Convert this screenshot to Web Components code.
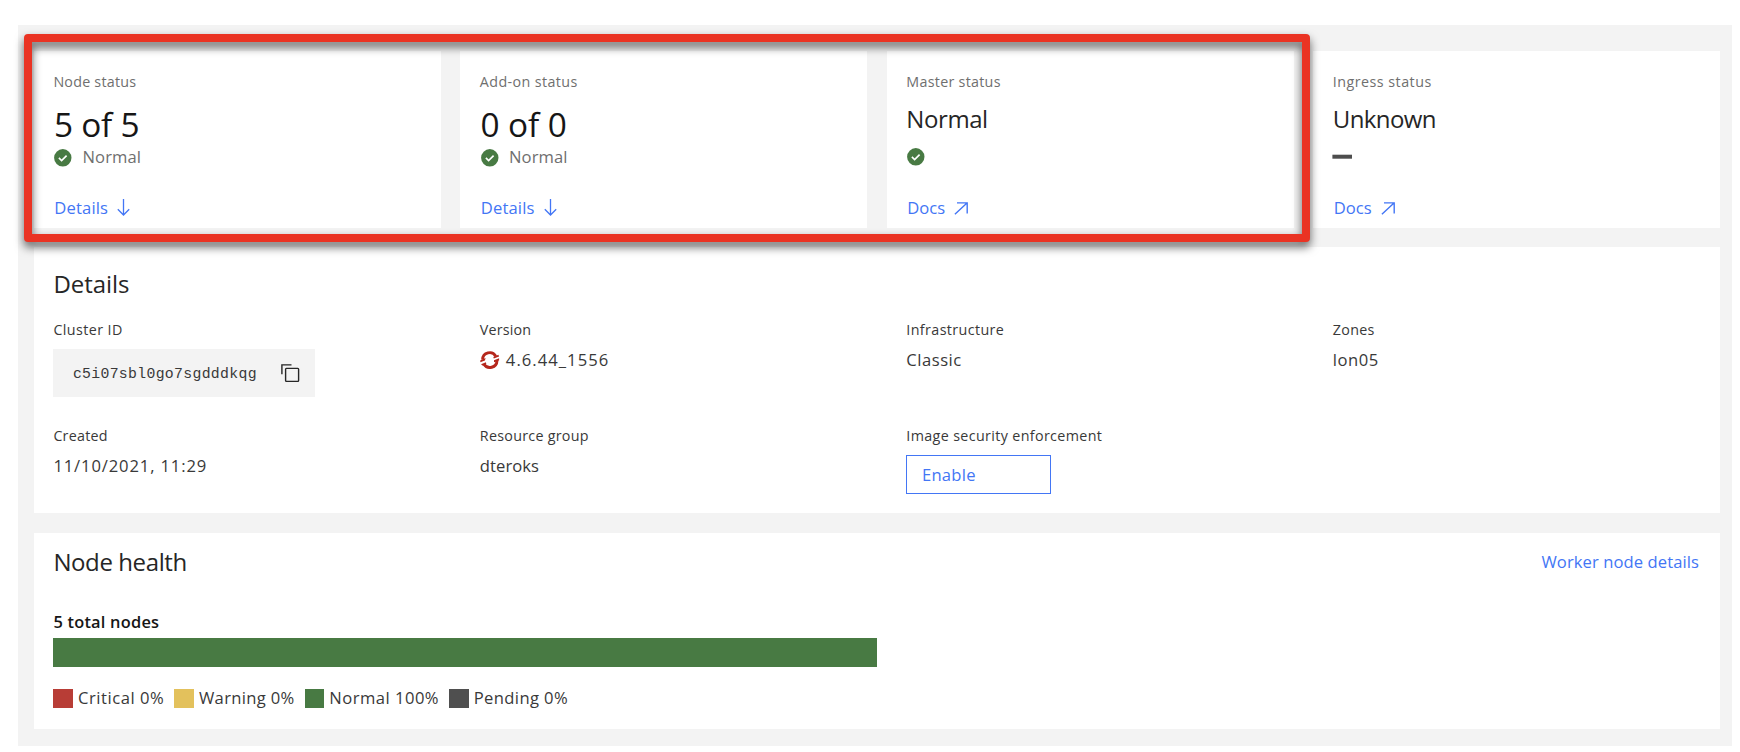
<!DOCTYPE html>
<html lang="en">
<head>
<meta charset="utf-8">
<title>Cluster overview</title>
<style>
html,body{margin:0;background:#fff}
body{width:1740px;height:752px;overflow:hidden;font-family:"Open Sans","Noto Sans",sans-serif;color:#161616}
</style>
</head>
<body>
<cluster-overview></cluster-overview>
<script>
const define = (name, html, init) => {
  const t = document.createElement('template');
  t.innerHTML = html;
  customElements.define(name, class extends HTMLElement {
    constructor() {
      super();
      this.attachShadow({mode: 'open'}).append(t.content.cloneNode(true));
    }
    connectedCallback() { if (init) init(this, this.shadowRoot); }
  });
};

/* Line of text, tracked so that it spans the width in its "w" attribute. */
define('ui-text', `<style>
  :host{display:block;white-space:nowrap;font-size:14.3px;line-height:20px;color:#393939}
  :host([kind=muted]){color:#6f6f6f}
  :host([kind=body]){font-size:16.6px;line-height:24px}
  :host([kind=grey]){font-size:16.6px;line-height:24px;color:#6f6f6f}
  :host([kind=link]){font-size:16.6px;line-height:24px;color:#4376f5}
  :host([kind=strong]){font-size:16.4px;line-height:24px;color:#161616;font-weight:600}
  :host([kind=title]){font-size:24px;line-height:32px;color:#262626}
  :host([kind=big]){font-size:33.4px;line-height:40px;color:#161616;font-weight:400}
  :host([kind=code]){font-family:"Liberation Mono",monospace;font-size:14.8px;line-height:20px}
  span{display:inline-block}
</style><span><slot></slot></span>`, (el, root) => {
  const span = root.querySelector('span');
  const n = el.textContent.length;
  const natural = span.getBoundingClientRect().width;
  span.style.letterSpacing = ((+el.getAttribute('w') + .4 - natural) / n).toFixed(3) + 'px';
});

const ICONS = {
  check: [17.6, 17.6, `<circle cx="8.8" cy="8.8" r="8.7" fill="#487a43"/><path d="M4.9 8.9l2.7 2.6 5-4.9" fill="none" stroke="#fff" stroke-width="1.7"/>`],
  down: [13, 17, `<path d="M6.5 0v15.8M.8 10.2l5.7 5.8 5.7-5.8" fill="none" stroke="#4376f5" stroke-width="1.3"/>`],
  out: [14, 13, `<path d="M3 .9h10.2v10.6M13 1L.9 12.3" fill="none" stroke="#4376f5" stroke-width="1.4"/>`],
  dash: [20, 17, `<rect x="-.6" y="6.7" width="19.6" height="4" fill="#4d4d4d"/>`],
  copy: [19, 19, `<rect x="4.6" y="4.4" width="13" height="13" rx=".8" fill="none" stroke="#262626" stroke-width="1.4"/><path d="M.9 10.2V.9h9.6" fill="none" stroke="#262626" stroke-width="1.4"/>`],
  openshift: [20, 19, `<g fill="none" stroke="#b5271c" stroke-width="2.9"><path d="M2.6 8.6A7.1 7.1 0 0 1 15.8 5.2"/><path d="M17 9.6A7.1 7.1 0 0 1 3.8 13"/></g><path d="M.4 9.2l5.2-2.1-.7 2.4L.3 11.3zM13.3 5.9l5.1-2.2.7 1.9-5.3 2zM1 13.2l4.9-1.9.4 1.6-3.4 1.8zM14 9.2l5.1-1.9v2.2l-5.1 1.8z" fill="#b5271c"/>`]
};
customElements.define('ui-icon', class extends HTMLElement {
  connectedCallback() {
    const [w, h, body] = ICONS[this.getAttribute('name')];
    this.attachShadow({mode: 'open'}).innerHTML =
      `<style>:host{display:block;flex:none}svg{display:block;overflow:visible}</style><svg width="${w}" height="${h}" viewBox="0 0 ${w} ${h}">${body}</svg>`;
  }
});

define('status-card', `<style>
  :host{display:flex;flex-direction:column;box-sizing:border-box;height:177px;background:#fff;padding:21.3px 19.7px 0 19.7px}
  .value{height:52px;box-sizing:border-box;padding-top:10.5px}
  :host([large]) .value{padding:12px 0 0 .6px}
  .state{display:flex;align-items:center;gap:10.6px;height:24px;margin-left:.7px}
  :host([large]) .state{padding-top:1.2px;margin-left:1px}
  .link{display:flex;align-items:center;gap:9px;margin:28px 0 0 .9px}
  :host([large]) .link{margin-top:26.3px}
</style>
<slot name="label"></slot><div class="value"><slot name="value"></slot></div>
<div class="state"><slot name="state"></slot></div><div class="link"><slot name="link"></slot></div>`);

define('ui-panel', `<style>:host{display:block;box-sizing:border-box;background:#fff;padding:0 19.7px}</style><slot></slot>`);

define('detail-field', `<style>
  :host{display:block}
  .v{margin-top:8.2px;display:flex;align-items:center;gap:6px}
</style><slot name="label"></slot><div class="v"><slot></slot></div>`);

define('copy-snippet', `<style>
  :host{display:flex;align-items:center;box-sizing:border-box;width:261.5px;height:48.5px;padding:0 14.6px 0 19.5px;justify-content:space-between;background:#f3f3f3}
  slot{display:block;padding-top:2px}
</style><slot></slot><ui-icon name="copy"></ui-icon>`);

define('outline-button', `<style>
  :host{display:flex;align-items:center;box-sizing:border-box;width:144.5px;height:39.5px;padding-left:14.6px;border:1.4px solid #4376f5}
</style><slot></slot>`);

define('legend-item', `<style>
  :host{display:flex;gap:5px;align-items:center}
  i{width:19.6px;height:19.6px;background:var(--swatch);margin-top:1px}
</style><i></i><slot></slot>`);

define('highlight-frame', `<style>
  :host{position:absolute;left:23.6px;top:33.8px;width:1286.8px;height:208.2px;box-sizing:border-box;
    border:8.8px solid #ea3323;border-radius:4px;filter:drop-shadow(0 5.6px 4.8px rgba(0,0,0,.62))}
</style>`);

define('cluster-overview', `<style>
  :host{display:block;box-sizing:border-box;width:1740px;height:752px;padding:25px 8px 6px 17.7px}
  main{box-sizing:border-box;height:721px;background:#f3f3f3;padding:26px 12px 0 16px}
  .cards{display:grid;grid-template-columns:repeat(4,1fr);gap:19.6px}
  .details{margin-top:19.3px;height:266px;padding-top:20.3px}
  .grid{display:grid;grid-template-columns:repeat(4,1fr);column-gap:19.6px;margin-right:-39.4px;grid-template-rows:106.2px auto;margin-top:20.4px}
  .health{margin-top:19.5px;height:196px;padding-top:13px}
  header{display:flex;justify-content:space-between;align-items:center;padding-right:1.2px}
  .total{display:block;margin-top:32.4px}
  .bar{width:823.4px;height:29.5px;background:#487a43;margin-top:3.8px}
  .legend{display:flex;gap:10px;margin-top:18.4px}
  .code{margin-top:.8px}
  .btn{margin-top:.6px}
</style>
<main>
 <section class="cards">
  <status-card large><ui-text slot="label" kind="muted" w="82.5">Node status</ui-text><ui-text slot="value" kind="big" w="85">5 of 5</ui-text>
   <ui-icon slot="state" name="check"></ui-icon><ui-text slot="state" kind="grey" w="58">Normal</ui-text>
   <ui-text slot="link" kind="link" w="53.5">Details</ui-text><ui-icon slot="link" name="down"></ui-icon></status-card>
  <status-card large><ui-text slot="label" kind="muted" w="97.5">Add-on status</ui-text><ui-text slot="value" kind="big" w="86">0 of 0</ui-text>
   <ui-icon slot="state" name="check"></ui-icon><ui-text slot="state" kind="grey" w="58">Normal</ui-text>
   <ui-text slot="link" kind="link" w="53.5">Details</ui-text><ui-icon slot="link" name="down"></ui-icon></status-card>
  <status-card><ui-text slot="label" kind="muted" w="94">Master status</ui-text><ui-text slot="value" kind="title" w="81">Normal</ui-text>
   <ui-icon slot="state" name="check"></ui-icon>
   <ui-text slot="link" kind="link" w="37.6">Docs</ui-text><ui-icon slot="link" name="out"></ui-icon></status-card>
  <status-card><ui-text slot="label" kind="muted" w="98.5">Ingress status</ui-text><ui-text slot="value" kind="title" w="102.6">Unknown</ui-text>
   <ui-icon slot="state" name="dash"></ui-icon>
   <ui-text slot="link" kind="link" w="37.6">Docs</ui-text><ui-icon slot="link" name="out"></ui-icon></status-card>
 </section>
 <ui-panel class="details">
  <ui-text kind="title" w="75.5">Details</ui-text>
  <div class="grid">
   <detail-field><ui-text slot="label" w="69">Cluster ID</ui-text><copy-snippet class="code"><ui-text kind="code" w="183.6">c5i07sbl0go7sgdddkqg</ui-text></copy-snippet></detail-field>
   <detail-field><ui-text slot="label" w="51">Version</ui-text><ui-icon name="openshift"></ui-icon><ui-text kind="body" w="103">4.6.44_1556</ui-text></detail-field>
   <detail-field><ui-text slot="label" w="97.5">Infrastructure</ui-text><ui-text kind="body" w="55">Classic</ui-text></detail-field>
   <detail-field><ui-text slot="label" w="41.5">Zones</ui-text><ui-text kind="body" w="45.5">lon05</ui-text></detail-field>
   <detail-field><ui-text slot="label" w="54">Created</ui-text><ui-text kind="body" w="153.4">11/10/2021, 11:29</ui-text></detail-field>
   <detail-field><ui-text slot="label" w="108.5">Resource group</ui-text><ui-text kind="body" w="58.8">dteroks</ui-text></detail-field>
   <detail-field><ui-text slot="label" w="195.5">Image security enforcement</ui-text><outline-button class="btn"><ui-text kind="link" w="53.5">Enable</ui-text></outline-button></detail-field>
  </div>
 </ui-panel>
 <ui-panel class="health">
  <header><ui-text kind="title" w="133">Node health</ui-text><ui-text kind="link" w="157.3">Worker node details</ui-text></header>
  <ui-text class="total" kind="strong" w="105.5">5 total nodes</ui-text>
  <div class="bar"></div>
  <div class="legend">
   <legend-item style="--swatch:#b83d36"><ui-text kind="body" w="86">Critical 0%</ui-text></legend-item>
   <legend-item style="--swatch:#e3c15c"><ui-text kind="body" w="95.3">Warning 0%</ui-text></legend-item>
   <legend-item style="--swatch:#487a43"><ui-text kind="body" w="109.4">Normal 100%</ui-text></legend-item>
   <legend-item style="--swatch:#4f4f4f"><ui-text kind="body" w="94">Pending 0%</ui-text></legend-item>
  </div>
 </ui-panel>
</main>
<highlight-frame></highlight-frame>`);
</script>
</body>
</html>
